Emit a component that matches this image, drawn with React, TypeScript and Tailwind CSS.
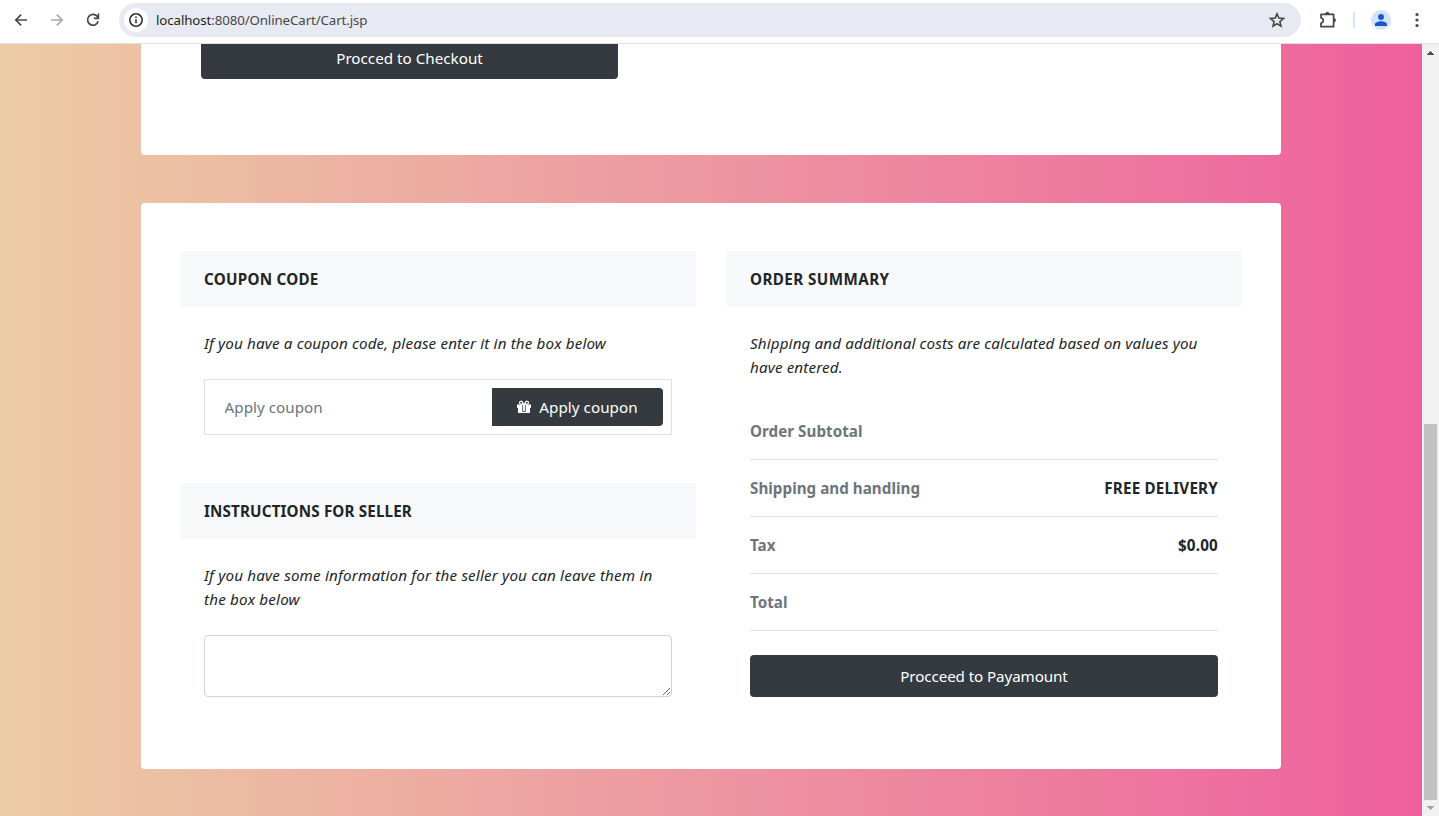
import type { ReactNode } from "react";

function BrowserBar() {
  return (
    <header className="flex h-11 shrink-0 items-start border-b border-[#dfe1e5] bg-white text-[#474747]">
      <nav className="flex h-10 w-[119px] items-center pl-[13px]">
        <svg width="16" height="16" viewBox="0 0 16 16" fill="none" stroke="#474747" strokeWidth="1.7">
          <path d="M14 8H3M8.2 2.6 2.8 8l5.4 5.4" />
        </svg>
        <svg className="ml-5" width="16" height="16" viewBox="0 0 16 16" fill="none" stroke="#a9a9a9" strokeWidth="1.7">
          <path d="M2 8h11M7.8 2.6 13.2 8l-5.4 5.4" />
        </svg>
        <svg className="ml-5" width="16" height="16" viewBox="0 0 16 16" fill="none" stroke="#474747" strokeWidth="1.7">
          <path d="M13.2 9.3A5.4 5.4 0 1 1 12.1 4.3L13.4 6.2M13.4 1.6v4.8H8.8" />
        </svg>
      </nav>
      <div className="mt-[3px] flex h-[34px] w-[1182px] items-center rounded-full bg-[#e7eaf3] pl-[5px] pr-4">
        <span className="flex size-6 items-center justify-center rounded-full bg-white">
          <svg width="16" height="16" viewBox="0 0 16 16" fill="none" stroke="#303134" strokeWidth="1.6">
            <circle cx="8" cy="8" r="6.2" />
            <path d="M8 7.2v4M8 4.6v1.5" />
          </svg>
        </span>
        <span className="ml-2 flex-1 pt-px text-[13.3px] tracking-[-0.11px] text-[#474747]">
          <span className="text-[#1f1f1f]">localhost</span>:8080/OnlineCart/Cart.jsp
        </span>
        <svg width="16" height="16" viewBox="0 0 16 16" fill="none" stroke="#474747" strokeWidth="1.6">
          <path d="m8 1.8 1.8 4.3 4.7.4-3.6 3.1 1.1 4.5L8 11.7l-4 2.4 1.1-4.5-3.6-3.1 4.7-.4Z" />
        </svg>
      </div>
      <div className="flex h-10 items-center pl-[18px]">
        <svg width="18" height="18" viewBox="0 0 18 18" fill="none" stroke="#474747" strokeWidth="1.7" strokeLinejoin="round">
          <path d="M2 3.3h12.6v12.4H2v-3.6c3-.4 3-4.7 0-5.1Z" />
          <path d="M6.5 3a1.8 1.8 0 0 1 3.6 0ZM14.8 7.5a1.8 1.8 0 0 1 0 3.6Z" fill="#474747" strokeWidth="0.8" />
        </svg>
        <span className="ml-4 h-4 w-0.5 bg-[#d3e3fd]" />
        <svg className="ml-4" width="20" height="20" viewBox="0 0 20 20">
          <circle cx="10" cy="10" r="10" fill="#d3e3fd" />
          <circle cx="10" cy="7" r="3" fill="#1b55c9" />
          <path d="M4 16v-1.7c0-2 3.6-3 6-3s6 1 6 3V16Z" fill="#1b55c9" />
        </svg>
        <svg className="ml-[18px]" width="16" height="16" viewBox="0 0 16 16" fill="#474747">
          <circle cx="8" cy="2.5" r="1.6" />
          <circle cx="8" cy="8" r="1.6" />
          <circle cx="8" cy="13.5" r="1.6" />
        </svg>
      </div>
    </header>
  );
}

function ScrollBar() {
  return (
    <aside className="flex w-[17px] shrink-0 flex-col items-center bg-[#f1f1f1]">
      <svg width="17" height="17" viewBox="0 0 17 17" fill="#505050" shapeRendering="crispEdges">
        <path d="M5 11 8.5 7.2 12 11Z" />
      </svg>
      <div className="mt-[363px] h-[376px] w-[13px] bg-[#c1c1c1]" />
      <svg width="17" height="16" viewBox="0 0 17 16" fill="#a3a3a3" shapeRendering="crispEdges">
        <path d="M5 6h7L8.5 9.8Z" />
      </svg>
    </aside>
  );
}

function SectionTitle({ children }: { children: ReactNode }) {
  return (
    <h2 className="flex h-14 items-center bg-[#f8f9fa] px-6 text-[15.2px] font-bold uppercase">
      {children}
    </h2>
  );
}

const rows = [
  { label: "Order Subtotal", value: "" },
  { label: "Shipping and handling", value: "FREE DELIVERY" },
  { label: "Tax", value: "$0.00" },
  { label: "Total", value: "" },
];

export default function App() {
  return (
    <div className="flex h-[816px] w-[1439px] flex-col overflow-hidden bg-white font-['Noto_Sans','Open_Sans',sans-serif] text-[#212529]">
      <BrowserBar />
      <div className="flex min-h-0 flex-1">
        <main className="flex flex-1 flex-col items-center bg-linear-to-r/srgb from-[#eccca4] to-[#ee609d]">
          <section className="flex h-[111px] w-[1140px] flex-col justify-end overflow-hidden rounded-b bg-white pb-[76px] pl-[60px]">
            <button className="h-[42px] w-[417px] shrink-0 rounded bg-[#343a40] text-[15.2px] tracking-[0.01px] text-white">
              Procced to Checkout
            </button>
          </section>

          <section className="mt-12 grid h-[566px] w-[1140px] grid-cols-2 gap-[30px] rounded bg-white px-[39px] py-12">
            <div>
              <SectionTitle>
                <span className="tracking-[0.26px]">Coupon code</span>
              </SectionTitle>
              <div className="p-6">
                <p className="text-[15.2px] italic leading-6 tracking-[0.14px]">
                  If you have a coupon code, please enter it in the box below
                </p>
                <div className="mt-6 flex h-14 border border-[#dee2e6] p-2">
                  <input
                    className="min-w-0 flex-1 px-[11.5px] text-[15.2px] tracking-[0.04px] outline-none placeholder:text-[#6c757d]"
                    placeholder="Apply coupon"
                  />
                  <button className="flex w-[171px] items-center justify-center rounded-r bg-[#343a40] text-[15.2px] tracking-[0.04px] text-white">
                    <svg className="mr-2" width="14" height="14" viewBox="0 0 14 14" fill="none">
                      <path d="M0 4.4h14v3.6h-1v5H1V8H0Z" fill="#fff" />
                      <path d="M6.6 4.2H4A1.5 1.5 0 1 1 5.1 1.7ZM7.4 4.2H10A1.5 1.5 0 1 0 8.9 1.7Z" stroke="#fff" strokeWidth="1.2" />
                      <path d="M5.6 5.2v6.3h2.8V5.2" stroke="#343a40" strokeWidth="0.8" />
                    </svg>
                    Apply coupon
                  </button>
                </div>
              </div>
              <div className="mt-6">
                <SectionTitle>
                  <span className="tracking-[0.15px]">Instructions for seller</span>
                </SectionTitle>
              </div>
              <div className="p-6">
                <p className="text-[15.2px] italic leading-6 tracking-[0.17px]">
                  If you have some information for the seller you can leave them in
                  <br />
                  the box below
                </p>
                <textarea className="mt-6 block h-[62px] w-full resize-y rounded border border-[#ced4da] px-3 py-1.5 outline-none" />
              </div>
            </div>

            <div>
              <SectionTitle>
                <span className="tracking-[0.42px]">Order summary</span>
              </SectionTitle>
              <div className="p-6">
                <p className="text-[15.2px] italic leading-6 tracking-[0.125px]">
                  Shipping and additional costs are calculated based on values you
                  <br />
                  have entered.
                </p>
                <ul className="my-6 text-[15.2px] font-bold">
                  {rows.map((row) => (
                    <li key={row.label} className="flex h-[57px] items-center justify-between border-b border-[#dee2e6]">
                      <span className="tracking-[0.03px] text-[#6c757d]">{row.label}</span>
                      <span className="tracking-[0.2px]">{row.value}</span>
                    </li>
                  ))}
                </ul>
                <button className="block h-[42px] w-full rounded bg-[#343a40] text-[15.2px] tracking-[-0.1px] text-white">
                  Procceed to Payamount
                </button>
              </div>
            </div>
          </section>
        </main>
        <ScrollBar />
      </div>
    </div>
  );
}
